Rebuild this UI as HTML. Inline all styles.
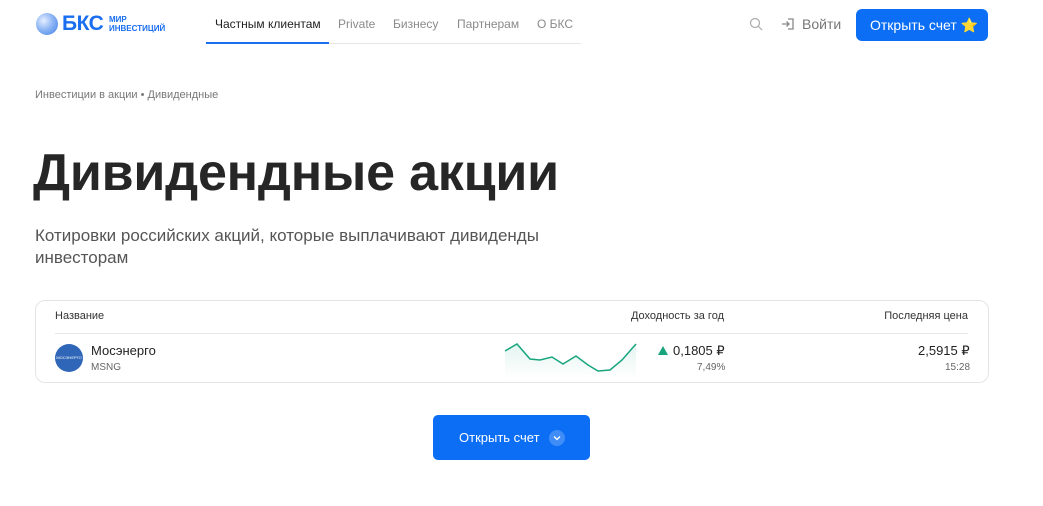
<!DOCTYPE html>
<html><head><meta charset="utf-8"><style>
*{margin:0;padding:0;box-sizing:border-box}
body{width:1043px;height:506px;background:#fff;font-family:"Liberation Sans",sans-serif;color:#1f1f1f;position:relative;overflow:hidden}
.abs{position:absolute}
.nav a{position:absolute;top:17px;font-size:12px;color:#8a8a8a;text-decoration:none;white-space:nowrap}
</style></head><body>
<div class="abs" style="left:36px;top:13px;width:22px;height:22px;border-radius:50%;background:radial-gradient(circle at 35% 35%,#e6efff 0,#8fb6f5 45%,#3d7de6 100%)"></div>
<div class="abs" style="left:62px;top:12px;font-size:21px;font-weight:bold;color:#1a6ef0;letter-spacing:-0.5px">БКС</div>
<div class="abs" style="left:109px;top:15px;font-size:8px;font-weight:bold;color:#1a6ef0;line-height:9px">МИР<br>ИНВЕСТИЦИЙ</div>
<div class="nav">
<a style="left:215px;color:#1f1f1f">Частным клиентам</a>
<a style="left:338px">Private</a>
<a style="left:393px">Бизнесу</a>
<a style="left:457px">Партнерам</a>
<a style="left:537px">О БКС</a>
</div>
<div class="abs" style="left:206px;top:43px;width:375px;height:1px;background:#e6e6e6"></div>
<div class="abs" style="left:206px;top:42px;width:123px;height:2px;background:#1a6ef0"></div>
<svg class="abs" style="left:749px;top:17px" width="14" height="14" viewBox="0 0 14 14"><circle cx="6" cy="6" r="4.5" fill="none" stroke="#aaa" stroke-width="1.2"/><path d="M9.5 9.5L13 13" stroke="#aaa" stroke-width="1.2"/></svg>
<svg class="abs" style="left:781px;top:17px" width="14" height="14" viewBox="0 0 14 14" fill="none" stroke="#888" stroke-width="1.3"><path d="M7 2h5v10H7"/><path d="M1 7h7M5.5 4.5L8 7l-2.5 2.5"/></svg>
<div class="abs" style="left:802px;top:16px;font-size:14px;color:#777">Войти</div>
<div class="abs" style="left:856px;top:9px;width:132px;height:32px;border-radius:6px;background:#0b6ef5;color:#fff;font-size:14px;line-height:32px;padding-left:14px">Открыть счет <span style="font-size:14px">⭐</span></div>
<div class="abs" style="left:35px;top:89px;font-size:11px;color:#777">Инвестиции в акции • Дивидендные</div>
<div class="abs" style="left:33px;top:143px;font-size:52px;font-weight:bold;color:#262626;letter-spacing:-0.2px;white-space:nowrap">Дивидендные акции</div>
<div class="abs" style="left:35px;top:225px;font-size:17px;line-height:22px;color:#555;width:540px">Котировки российских акций, которые выплачивают дивиденды инвесторам</div>
<div class="abs" style="left:35px;top:300px;width:954px;height:83px;border:1px solid #e4e4e4;border-radius:10px"></div>
<div class="abs" style="left:55px;top:310px;font-size:11px;color:#333">Название</div>
<div class="abs" style="right:319px;top:310px;font-size:11px;color:#333">Доходность за год</div>
<div class="abs" style="right:75px;top:310px;font-size:11px;color:#333">Последняя цена</div>
<div class="abs" style="left:55px;top:333px;width:913px;height:1px;background:#e8e8e8"></div>
<div class="abs" style="left:55px;top:344px;width:28px;height:28px;border-radius:50%;background:#2f66b8;color:#fff;font-size:4px;line-height:28px;text-align:center">МОСЭНЕРГО</div>
<div class="abs" style="left:91px;top:343px;font-size:13px;color:#222">Мосэнерго</div>
<div class="abs" style="left:91px;top:362px;font-size:10px;color:#666">MSNG</div>
<svg class="abs" style="left:500px;top:338px" width="140" height="40" viewBox="500 338 140 40">
<defs><linearGradient id="g" x1="0" y1="0" x2="0" y2="1"><stop offset="0" stop-color="#18a57e" stop-opacity=".12"/><stop offset="1" stop-color="#18a57e" stop-opacity="0"/></linearGradient></defs>
<path d="M505 351L517 344L530 359L540 360L552 357L563 364L576 356L588 365L598 371L610 370L622 360L636 344L636 378L505 378Z" fill="url(#g)"/>
<path d="M505 351L517 344L530 359L540 360L552 357L563 364L576 356L588 365L598 371L610 370L622 360L636 344" fill="none" stroke="#18a57e" stroke-width="1.5"/></svg>
<svg class="abs" style="left:658px;top:346px" width="10" height="9"><path d="M5 0L10 9H0Z" fill="#18a57e"/></svg>
<div class="abs" style="left:673px;top:343px;font-size:13px;color:#222">0,1805 ₽</div>
<div class="abs" style="left:697px;top:362px;font-size:10px;color:#666">7,49%</div>
<div class="abs" style="left:918px;top:343px;font-size:13px;color:#222">2,5915 ₽</div>
<div class="abs" style="left:945px;top:362px;font-size:10px;color:#666">15:28</div>
<div class="abs" style="left:433px;top:415px;width:157px;height:45px;border-radius:5px;background:#0b6ef5;color:#fff;font-size:13px;line-height:45px;padding-left:26px">Открыть счет</div>
<div class="abs" style="left:549px;top:430px;width:16px;height:16px;border-radius:50%;background:rgba(255,255,255,.22)"></div>
<svg class="abs" style="left:553px;top:435px" width="8" height="6"><path d="M1 1.5L4 4.5L7 1.5" fill="none" stroke="#fff" stroke-width="1.3"/></svg>
</body></html>
